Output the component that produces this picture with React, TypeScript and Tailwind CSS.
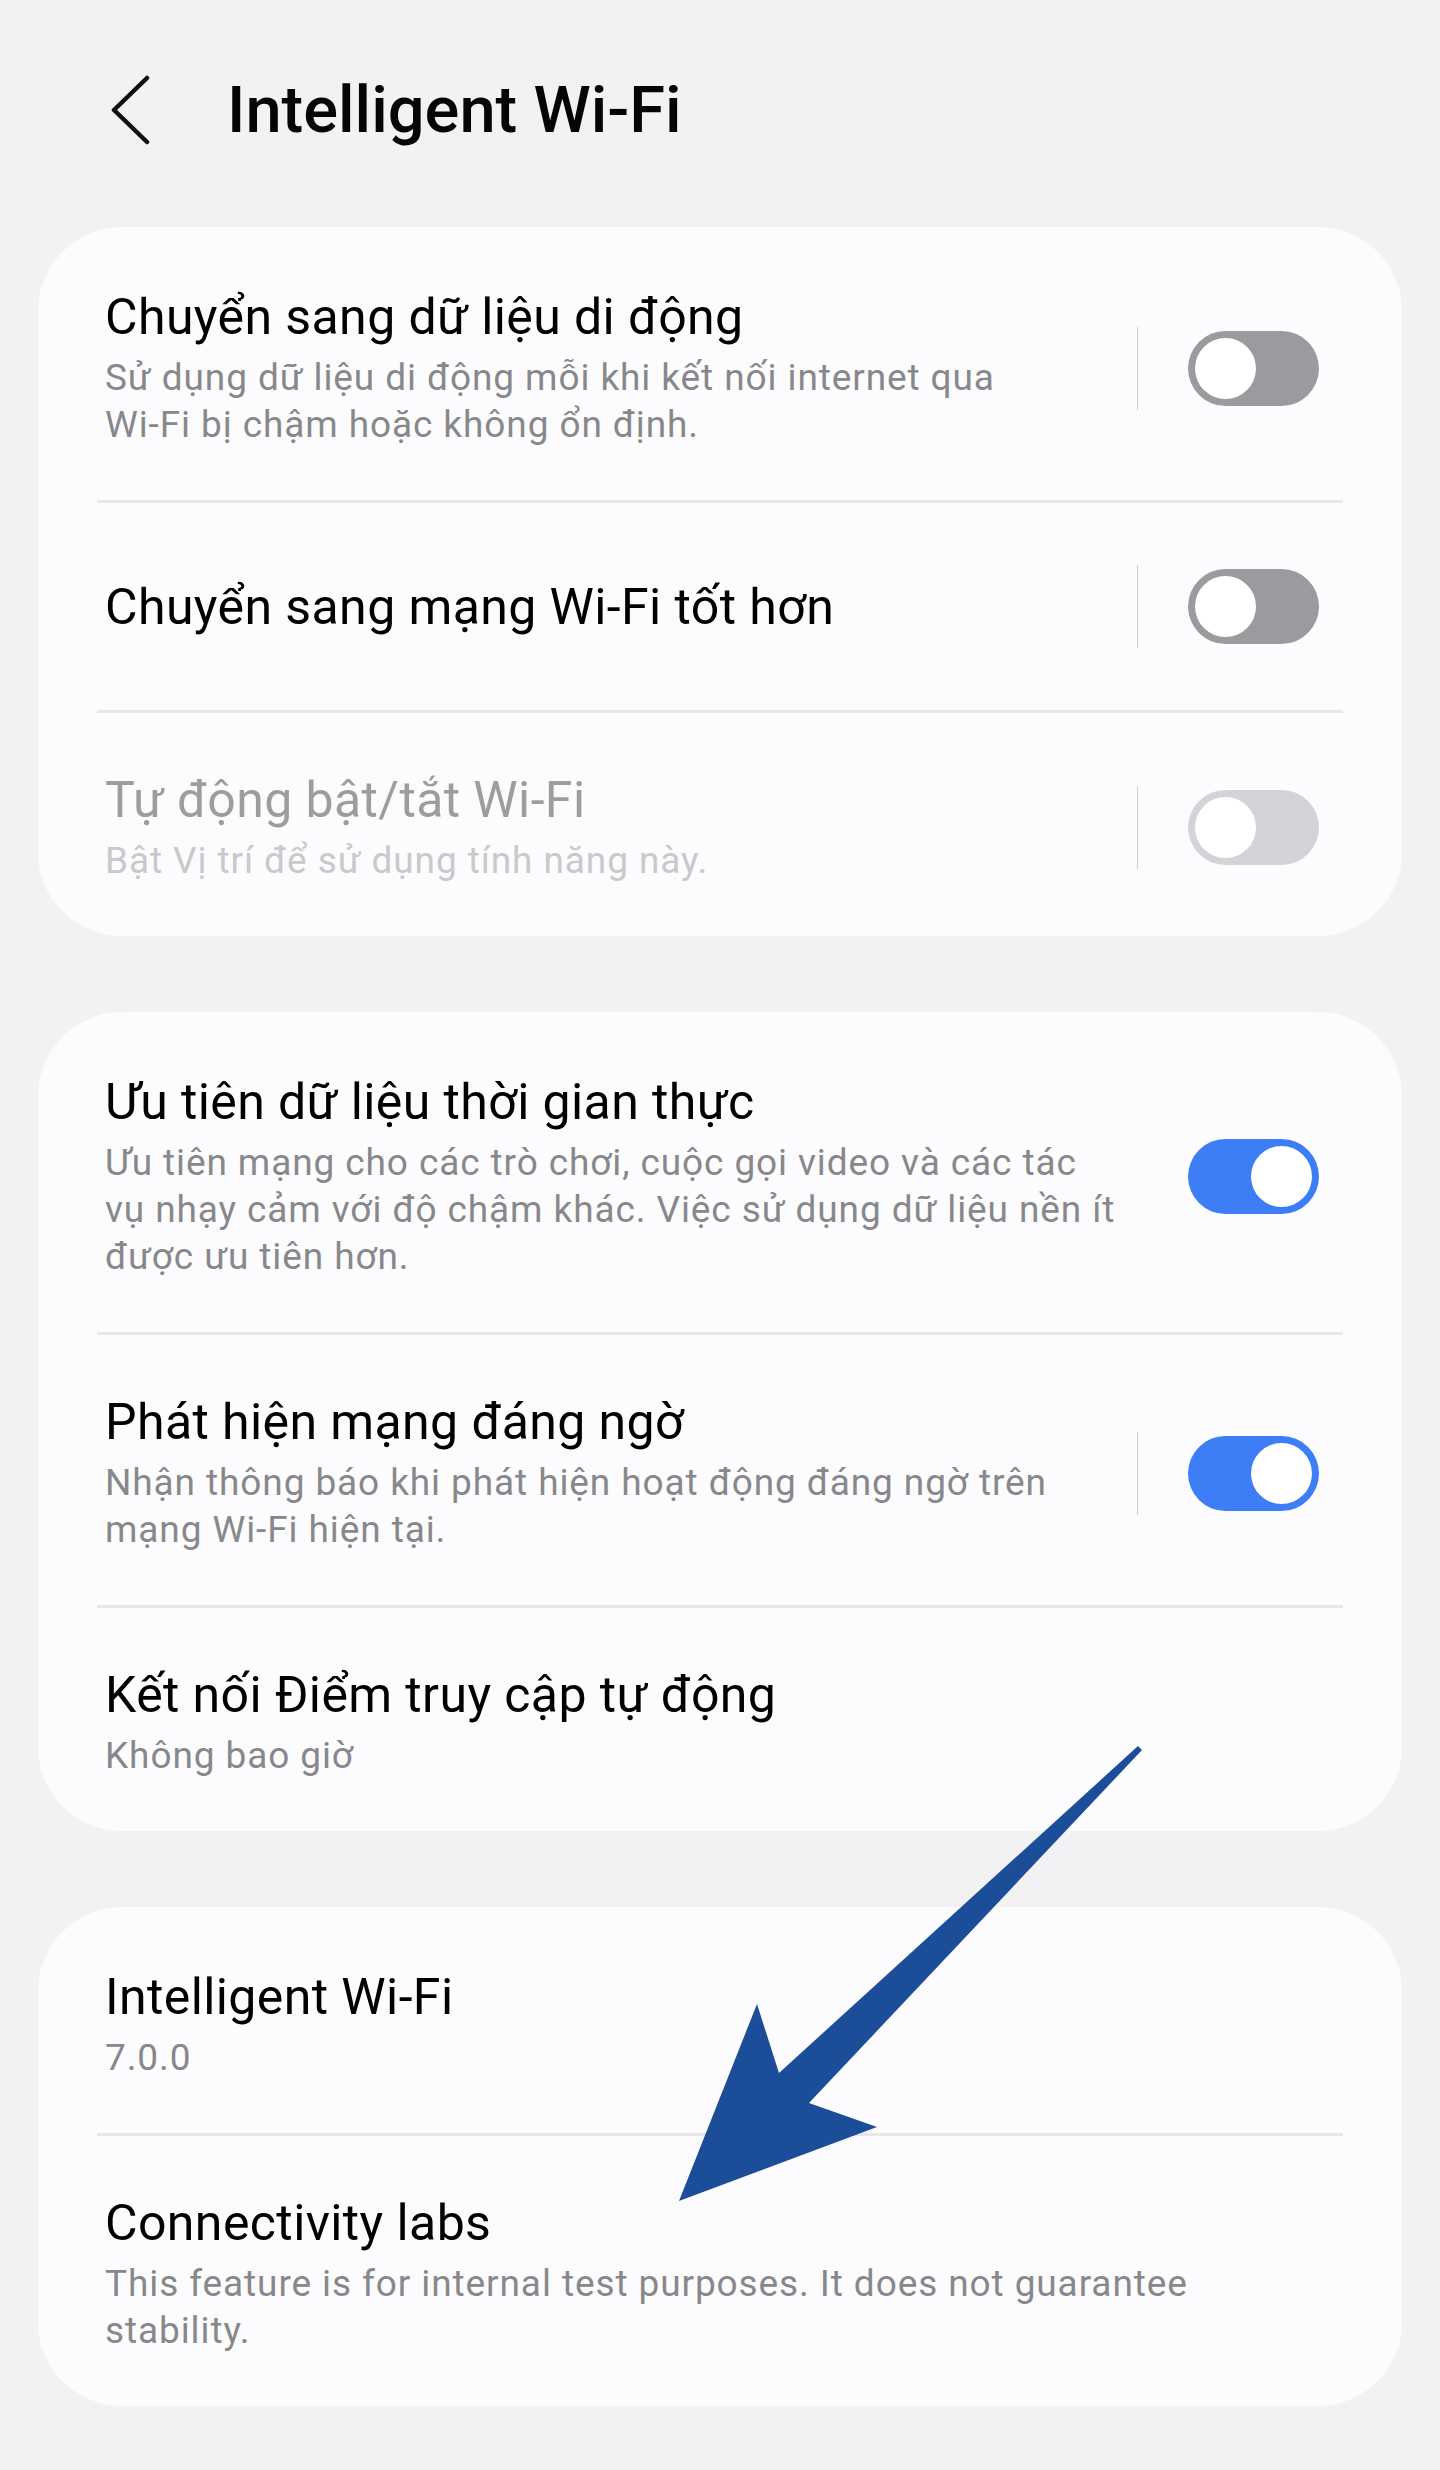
import React from 'react';

type RowProps = {
  title: string;
  lines?: string[];
  toggle?: 'on' | 'off' | 'disabled';
  divider?: boolean;
  disabled?: boolean;
  first?: boolean;
  single?: boolean;
};

const Toggle = ({ state }: { state: 'on' | 'off' | 'disabled' }) => {
  const track =
    state === 'on' ? 'bg-[#3d7ef6] justify-end' : state === 'off' ? 'bg-[#9b9b9f] justify-start' : 'bg-[#d4d4d8] justify-start';
  return (
    <div className={`flex h-[75px] w-[131px] shrink-0 items-center rounded-full px-[7px] ${track}`}>
      <div className="h-[61px] w-[61px] rounded-full bg-white" />
    </div>
  );
};

const Row = ({ title, lines, toggle, divider, disabled, first, single }: RowProps) => {
  const pad = single ? 'py-[62px]' : first ? 'pt-[61px] pb-[52px]' : 'pt-[58px] pb-[52px]';
  return (
    <div className={`flex items-center pl-[8px] ${pad}`}>
      <div className="min-w-0 flex-1">
        <div className={`text-[50px] leading-[58px] tracking-[0.4px] ${disabled ? 'text-[#9d9d9f]' : 'text-black'}`}>
          {title}
        </div>
        {lines && (
          <div
            className={`mt-[8px] text-[37px] leading-[47px] tracking-[0.9px] ${
              disabled ? 'text-[#c9c9cb]' : 'text-[#88888b]'
            }`}
          >
            {lines.map((l, i) => (
              <div key={i} className="whitespace-nowrap">
                {l}
              </div>
            ))}
          </div>
        )}
      </div>
      {toggle && (
        <div className="flex items-center pr-[24px]">
          {divider && <div className="mr-[50px] h-[83px] w-px bg-[#cfcfd1]" />}
          <Toggle state={toggle} />
        </div>
      )}
    </div>
  );
};

const Sep = () => <div className="h-[3px] bg-[#e7e7e9]" />;

const Card = ({ children }: { children: React.ReactNode }) => (
  <div className="rounded-[84px] bg-[#fcfcfe] px-[59px]">{children}</div>
);

export default function App() {
  return (
    <div
      className="relative min-h-[2470px] w-full bg-[#f2f2f4] pb-[64px]"
      style={{ fontFamily: 'Roboto, "Noto Sans", sans-serif' }}
    >
      {/* Header */}
      <div className="flex items-center pl-[104px] pt-[72px]">
        <svg width="46" height="70" viewBox="0 0 46 70" fill="none" className="shrink-0">
          <path d="M43 3 L10 35 L43 67" stroke="#111" strokeWidth="4.5" strokeLinecap="round" strokeLinejoin="round" />
        </svg>
        <h1 className="ml-[77px] text-[65px] font-medium leading-[76px] text-[#050505]">Intelligent Wi-Fi</h1>
      </div>

      <div className="mt-[79px] flex flex-col gap-[76px] px-[38px]">
        <Card>
          <Row
            first
            title="Chuyển sang dữ liệu di động"
            lines={['Sử dụng dữ liệu di động mỗi khi kết nối internet qua', 'Wi-Fi bị chậm hoặc không ổn định.']}
            toggle="off"
            divider
          />
          <Sep />
          <Row single title="Chuyển sang mạng Wi-Fi tốt hơn" toggle="off" divider />
          <Sep />
          <Row
            title="Tự động bật/tắt Wi-Fi"
            lines={['Bật Vị trí để sử dụng tính năng này.']}
            toggle="disabled"
            divider
            disabled
          />
        </Card>

        <Card>
          <Row
            first
            title="Ưu tiên dữ liệu thời gian thực"
            lines={[
              'Ưu tiên mạng cho các trò chơi, cuộc gọi video và các tác',
              'vụ nhạy cảm với độ chậm khác. Việc sử dụng dữ liệu nền ít',
              'được ưu tiên hơn.',
            ]}
            toggle="on"
          />
          <Sep />
          <Row
            title="Phát hiện mạng đáng ngờ"
            lines={['Nhận thông báo khi phát hiện hoạt động đáng ngờ trên', 'mạng Wi-Fi hiện tại.']}
            toggle="on"
            divider
          />
          <Sep />
          <Row title="Kết nối Điểm truy cập tự động" lines={['Không bao giờ']} />
        </Card>

        <Card>
          <Row first title="Intelligent Wi-Fi" lines={['7.0.0']} />
          <Sep />
          <Row
            title="Connectivity labs"
            lines={['This feature is for internal test purposes. It does not guarantee', 'stability.']}
          />
        </Card>
      </div>

      {/* annotation arrow */}
      <svg
        className="pointer-events-none absolute left-0 top-0"
        width="1440"
        height="2470"
        viewBox="0 0 1440 2470"
      >
        <polygon
          points="1138,1746 1142,1750 809,2103 877,2127 679,2201 757,2004 779,2073"
          fill="#1c4d98"
        />
      </svg>
    </div>
  );
}
